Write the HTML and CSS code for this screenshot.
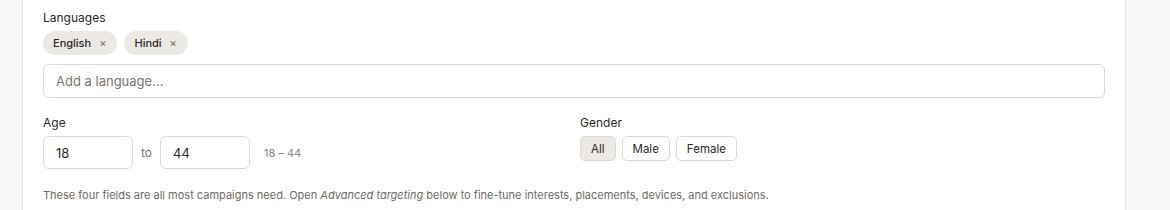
FILE: index.html
```html
<!DOCTYPE html>
<html lang="en">

<head>
    <meta charset="UTF-8" />
    <title>Audience</title>
    <link rel="stylesheet" href="styles.css">
</head>

<body>
    <div class="card">
        <div class="field">
            <label class="label">Languages</label>
            <div class="chips">
                <span class="chip">English <span class="chip-x">&times;</span></span>
                <span class="chip">Hindi <span class="chip-x">&times;</span></span>
            </div>
            <input type="text" class="text-input" placeholder="Add a language..." />
        </div>

        <div class="row">
            <div class="field">
                <label class="label">Age</label>
                <div class="age-range">
                    <input type="text" class="text-input age" value="18" />
                    <span class="to">to</span>
                    <input type="text" class="text-input age" value="44" />
                    <span class="range-hint">18 &ndash; 44</span>
                </div>
            </div>
            <div class="field">
                <label class="label">Gender</label>
                <div class="segments">
                    <button class="seg active">All</button>
                    <button class="seg">Male</button>
                    <button class="seg">Female</button>
                </div>
            </div>
        </div>

        <p class="note">These four fields are all most campaigns need. Open <em>Advanced targeting</em> below to fine-tune interests, placements, devices, and exclusions.</p>
    </div>
</body>

</html>
```

FILE: styles.css
```css
body {
    margin: 0;
    font-family: Inter, "Noto Sans", sans-serif;
    background-color: #f9f8f6;
    color: #2b2825;
}

.card {
    margin: 0 44px 0 22px;
    background: #fff;
    border-left: 1px solid #e8e5df;
    border-right: 1px solid #e8e5df;
    padding: 10px 20px 20px 20px;
    min-height: 200px;
}

.label {
    display: block;
    font-size: 12px;
    line-height: 16px;
    margin-bottom: 5px;
}

.chips {
    display: flex;
    gap: 7px;
    margin-bottom: 9px;
}

.chip {
    display: inline-flex;
    align-items: center;
    gap: 8px;
    height: 24px;
    padding: 0 11px 0 10px;
    border-radius: 12px;
    background-color: #ece9e4;
    font-size: 11px;
    font-weight: 500;
    color: #2b2825;
}

.chip-x {
    font-size: 11px;
    font-weight: 400;
    color: #6b665f;
}

.text-input {
    box-sizing: border-box;
    width: 100%;
    height: 34px;
    padding: 0 12px;
    border: 1px solid #ddd9d2;
    border-radius: 6px;
    font-family: inherit;
    font-size: 13px;
    color: #2b2825;
    background: #fff;
}

.text-input::placeholder {
    color: #7a756e;
}

.row {
    display: grid;
    grid-template-columns: 1fr 1fr;
    gap: 12px;
    margin-top: 17px;
}

.age-range {
    display: flex;
    align-items: center;
    gap: 8px;
}

.text-input.age {
    width: 90px;
    height: 33px;
}

.to {
    font-size: 12px;
    color: #7a756e;
}

.range-hint {
    margin-left: 6px;
    font-size: 11px;
    color: #8a857e;
}

.segments {
    display: flex;
    gap: 6px;
}

.seg {
    height: 25px;
    padding: 0 10px;
    border: 1px solid #ddd9d2;
    border-radius: 5px;
    background: #fff;
    font-family: inherit;
    font-size: 11.5px;
    color: #2b2825;
    cursor: pointer;
}

.seg.active {
    background-color: #ece9e4;
}

.note {
    margin: 18px 0 0 0;
    font-size: 11px;
    line-height: 16px;
    color: #6f6a64;
}
```
